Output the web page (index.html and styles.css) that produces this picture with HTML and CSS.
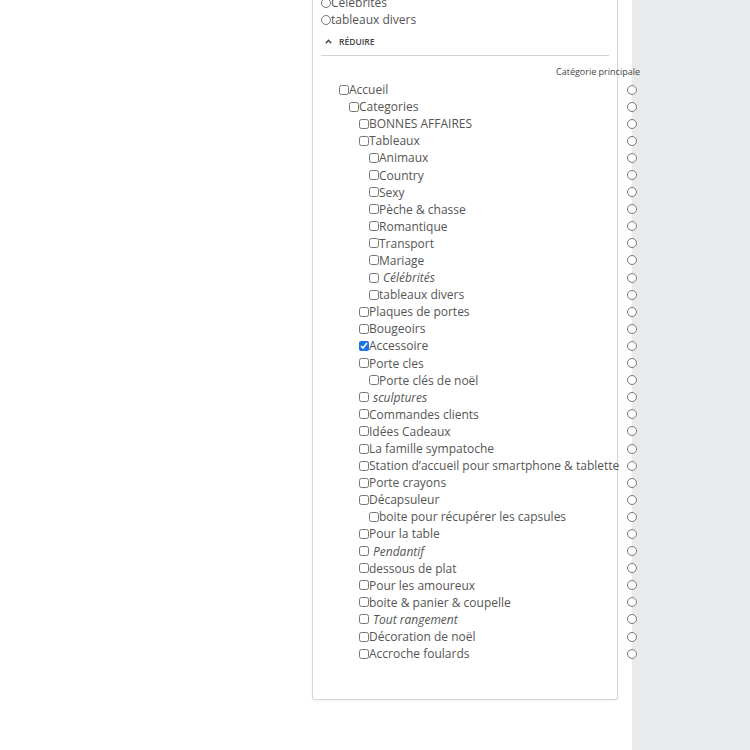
FILE: index.html
```html
<!DOCTYPE html>
<html lang="fr">
<head>
    <meta charset="UTF-8" />
    <title>Catégories</title>
    <link rel="stylesheet" href="styles.css">
</head>
<body>
    <div class="page">
        <div class="card">
            <!-- liste repliable -->
            <div class="radio-list">
                <label class="radio-item"><input type="radio" name="old">Célébrites</label>
                <label class="radio-item"><input type="radio" name="old">tableaux divers</label>
            </div>
            <div class="reduce">
                <svg width="7" height="5" viewBox="0 0 7 5"><path d="M0.8 4.2 L3.5 1.3 L6.2 4.2" fill="none" stroke="#444" stroke-width="1.4"/></svg>
                <span>Réduire</span>
            </div>
            <hr class="sep">

            <div class="tree">
                <div class="tree-head">Catégorie principale</div>
                <div class="row l1"><label><input type="checkbox">Accueil</label><input type="radio" name="main"></div>
                <div class="row l2"><label><input type="checkbox">Categories</label><input type="radio" name="main"></div>
                <div class="row l3"><label><input type="checkbox">BONNES AFFAIRES</label><input type="radio" name="main"></div>
                <div class="row l3"><label><input type="checkbox">Tableaux</label><input type="radio" name="main"></div>
                <div class="row l4"><label><input type="checkbox">Animaux</label><input type="radio" name="main"></div>
                <div class="row l4"><label><input type="checkbox">Country</label><input type="radio" name="main"></div>
                <div class="row l4"><label><input type="checkbox">Sexy</label><input type="radio" name="main"></div>
                <div class="row l4"><label><input type="checkbox">Pèche &amp; chasse</label><input type="radio" name="main"></div>
                <div class="row l4"><label><input type="checkbox">Romantique</label><input type="radio" name="main"></div>
                <div class="row l4"><label><input type="checkbox">Transport</label><input type="radio" name="main"></div>
                <div class="row l4"><label><input type="checkbox">Mariage</label><input type="radio" name="main"></div>
                <div class="row l4"><label><input type="checkbox"><em>Célébrités</em></label><input type="radio" name="main"></div>
                <div class="row l4"><label><input type="checkbox">tableaux divers</label><input type="radio" name="main"></div>
                <div class="row l3"><label><input type="checkbox">Plaques de portes</label><input type="radio" name="main"></div>
                <div class="row l3"><label><input type="checkbox">Bougeoirs</label><input type="radio" name="main"></div>
                <div class="row l3"><label><input type="checkbox" checked>Accessoire</label><input type="radio" name="main"></div>
                <div class="row l3"><label><input type="checkbox">Porte cles</label><input type="radio" name="main"></div>
                <div class="row l4"><label><input type="checkbox">Porte clés de noël</label><input type="radio" name="main"></div>
                <div class="row l3"><label><input type="checkbox"><em>sculptures</em></label><input type="radio" name="main"></div>
                <div class="row l3"><label><input type="checkbox">Commandes clients</label><input type="radio" name="main"></div>
                <div class="row l3"><label><input type="checkbox">Idées Cadeaux</label><input type="radio" name="main"></div>
                <div class="row l3"><label><input type="checkbox">La famille sympatoche</label><input type="radio" name="main"></div>
                <div class="row l3"><label><input type="checkbox">Station d’accueil pour smartphone &amp; tablette</label><input type="radio" name="main"></div>
                <div class="row l3"><label><input type="checkbox">Porte crayons</label><input type="radio" name="main"></div>
                <div class="row l3"><label><input type="checkbox">Décapsuleur</label><input type="radio" name="main"></div>
                <div class="row l4"><label><input type="checkbox">boite pour récupérer les capsules</label><input type="radio" name="main"></div>
                <div class="row l3"><label><input type="checkbox">Pour la table</label><input type="radio" name="main"></div>
                <div class="row l3"><label><input type="checkbox"><em>Pendantif</em></label><input type="radio" name="main"></div>
                <div class="row l3"><label><input type="checkbox">dessous de plat</label><input type="radio" name="main"></div>
                <div class="row l3"><label><input type="checkbox">Pour les amoureux</label><input type="radio" name="main"></div>
                <div class="row l3"><label><input type="checkbox">boite &amp; panier &amp; coupelle</label><input type="radio" name="main"></div>
                <div class="row l3"><label><input type="checkbox"><em>Tout rangement</em></label><input type="radio" name="main"></div>
                <div class="row l3"><label><input type="checkbox">Décoration de noël</label><input type="radio" name="main"></div>
                <div class="row l3"><label><input type="checkbox">Accroche foulards</label><input type="radio" name="main"></div>
            </div>
        </div>
    </div>
</body>
</html>
```

FILE: styles.css
```css
/* page */
body {
    margin: 0;
    height: 100vh;
    overflow: hidden;
    background: #e9eaec;
    font-family: "Open Sans", "Liberation Sans", sans-serif;
    color: #555;
}

.page {
    display: flow-root;
    width: 632px;
    height: 100%;
    background: #fff;
}

/* carte */
.card {
    margin: -6px 0 0 312px;
    width: 306px;
    box-sizing: border-box;
    padding: 0 8px 37px;
    border: 1px solid #d6d6d6;
    border-top: none;
    border-radius: 0 0 3px 3px;
    box-shadow: 0 1px 3px rgba(0, 0, 0, 0.06);
}

input[type="radio"],
input[type="checkbox"] {
    width: 10px;
    height: 10px;
    margin: 0;
    flex: none;
    accent-color: #1a73e8;
}

.radio-item {
    display: flex;
    align-items: center;
    height: 17px;
    font-size: 12px;
}

.reduce {
    display: flex;
    align-items: center;
    height: 16px;
    margin-top: 5px;
    padding-left: 4px;
    gap: 7px;
    font-size: 8.5px;
    font-weight: 600;
    text-transform: uppercase;
    color: #444;
}

.sep {
    margin: 6px 0 0;
    border: none;
    border-top: 1px solid #d2d2d2;
}

/* arbre des catégories */
.tree {
    width: 319px;
    padding-top: 10px;
}

.tree-head {
    text-align: right;
    font-size: 9px;
    line-height: 12px;
    color: #444;
    margin-bottom: 3px;
}

.row {
    display: flex;
    align-items: center;
    height: 17.1px;
    font-size: 12px;
}

.row label {
    display: flex;
    align-items: center;
    white-space: pre;
}

.row em {
    margin-left: 4px;
}

.row input[type="radio"] {
    margin: 0 3px 0 auto;
}

.l1 { padding-left: 18px; }
.l2 { padding-left: 28px; }
.l3 { padding-left: 38px; }
.l4 { padding-left: 48px; }
```
